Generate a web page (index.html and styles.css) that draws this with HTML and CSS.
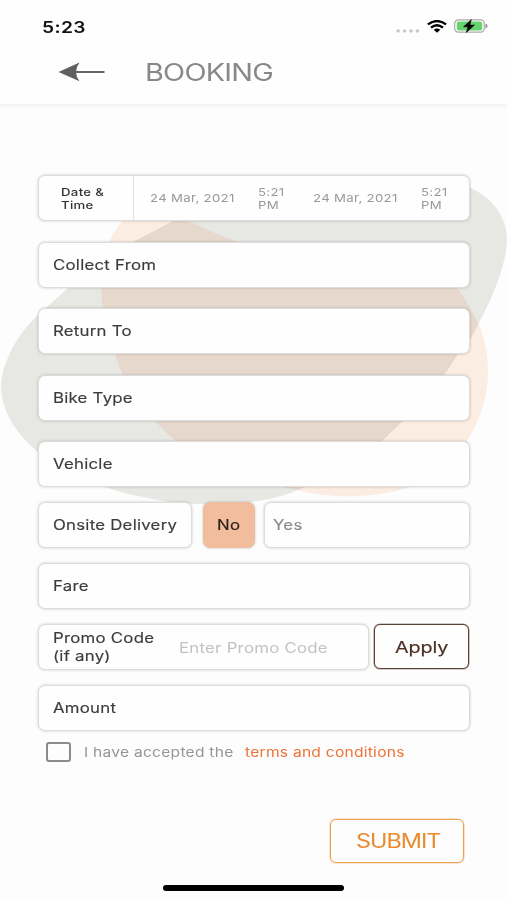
FILE: index.html
```html
<!DOCTYPE html>
<html lang="en">
<head>
<meta charset="utf-8">
<title>Booking</title>
<link rel="stylesheet" href="styles.css">
</head>
<body>
<div class="screen">
  <header class="header">
    <div class="status">
      <span class="wide clock">5:23</span>
      <div class="status-icons">
        <svg class="dots" width="24" height="6" viewBox="0 0 24 6" fill="#c8c8ca"><circle cx="2.2" cy="3" r="1.8"/><circle cx="8.6" cy="3" r="1.8"/><circle cx="15" cy="3" r="1.8"/><circle cx="21.4" cy="3" r="1.8"/></svg>
        <svg class="wifi" width="20" height="13" viewBox="0 0 20 13"><g fill="none" stroke="#000" stroke-width="2.4"><path d="M.9 4.4Q10-2.2 19.1 4.4"/><path d="M4 7.6Q10 3 16 7.6"/></g><path d="M6.7 9.8Q10 7.2 13.3 9.8L10 12.8Z"/></svg>
        <svg class="battery" width="34" height="14" viewBox="0 0 34 14"><rect x=".7" y=".9" width="29.6" height="12.2" rx="3.6" fill="#fff" stroke="#aaa" stroke-width="1.2"/><rect x="2.8" y="2.6" width="25.4" height="8.8" rx="2" fill="#65d36e"/><path d="M31.4 4.6Q33.6 5.2 33.6 7T31.4 9.4Z" fill="#999"/><path d="M17.3.6L9.6 7.8H14L12.4 13.4L20.4 6.1H15.8Z" stroke="#000" stroke-width=".6"/></svg>
      </div>
    </div>
    <div class="title-bar">
      <svg class="back" width="48" height="20" viewBox="0 0 48 20"><path d="M16 10H46.5" stroke="#666" stroke-width="2"/><path d="M0.5 10L21.5.5Q14.5 10 21.5 19.3Z" fill="#606060"/></svg>
      <h1 class="wide title">BOOKING</h1>
    </div>
  </header>

  <svg class="blobs" width="507" height="340" viewBox="0 170 507 340">
    <path class="blob-peach" d="M150 200C132 206 118 224 109 242C101 262 100 290 103 310C106 330 110 342 115 354C120 374 134 400 154 420C162 428 168 435 176 441C210 468 250 482 293 489C330 499 370 499 407 488C435 478 455 460 467 441C482 418 489 390 488 368C487 350 484 335 478 323C472 312 466 299 457 288C420 248 340 270 238 242C220 236 205 228 188 221C176 212 166 202 150 200Z"/>
    <path class="blob-grey" d="M360 176C410 173 440 177 469 187C493 198 507 217 507 240C506 270 488 307 470 340L458 354L445 374C432 392 418 407 404 420L382 441C360 458 330 477 303 488C285 496 268 500 250 502C200 508 150 502 105 487C80 479 56 466 38 452C17 435 2 412 1 388C1 378 3 369 7 360C14 342 25 327 38 315L68 288L133 242L173 221C230 192 295 179 360 176Z"/>
  </svg>

  <main class="form">
    <section class="field dates">
      <div class="dates-label"><span class="wide">Date &amp;<br>Time</span></div>
      <div class="date"><span class="wide">24 Mar, 2021</span></div>
      <div class="time"><span class="wide">5:21<br>PM</span></div>
      <div class="date"><span class="wide">24 Mar, 2021</span></div>
      <div class="time"><span class="wide">5:21<br>PM</span></div>
    </section>
    <section class="field"><span class="wide label">Collect From</span></section>
    <section class="field"><span class="wide label">Return To</span></section>
    <section class="field"><span class="wide label">Bike Type</span></section>
    <section class="field"><span class="wide label">Vehicle</span></section>
    <section class="row">
      <div class="field onsite"><span class="wide label">Onsite Delivery</span></div>
      <div class="field no"><span class="wide label">No</span></div>
      <div class="field yes"><span class="wide label">Yes</span></div>
    </section>
    <section class="field"><span class="wide label">Fare</span></section>
    <section class="row promo-row">
      <div class="field promo">
        <span class="wide label promo-label">Promo Code<br>(if any)</span>
        <span class="wide placeholder">Enter Promo Code</span>
      </div>
      <div class="apply"><span class="wide">Apply</span></div>
    </section>
    <section class="field"><span class="wide label">Amount</span></section>
    <section class="terms">
      <span class="checkbox"></span>
      <span class="accept"><span class="wide">I have accepted the</span></span>
      <span class="link"><span class="wide">terms and conditions</span></span>
    </section>
  </main>

  <footer class="footer">
    <div class="submit"><span class="wide">SUBMIT</span></div>
    <div class="home-bar"></div>
  </footer>
</div>
</body>
</html>
```

FILE: styles.css
```css
* { box-sizing: border-box; }
body { margin: 0; background: #fdfdfd; font-family: Inter, "Liberation Sans", sans-serif; }
.screen { position: relative; width: 507px; height: 900px; overflow: hidden; display: flex; flex-direction: column; }

/* Extended letterforms used across the app */
.wide { display: inline-block; transform: scaleX(1.2); transform-origin: left center; white-space: nowrap; }

.header { height: 104px; flex: none; background: #fefefe; box-shadow: 0 1px 5px rgba(0,0,0,.08); }
.status { height: 50px; display: flex; justify-content: space-between; padding: 17px 19px 0 42px; }
.clock { font-size: 16px; line-height: 20px; font-weight: 600; color: #111; letter-spacing: .3px; }
.status-icons { display: flex; align-items: flex-start; }
.dots { margin: 11px 0 0; }
.wifi { margin: 3px 0 0 7px; }
.battery { margin: 2px 0 0 7px; }
.title-bar { height: 44px; display: flex; align-items: center; padding-left: 58px; }
.title { margin: 2px 0 0 39px; font-size: 24px; line-height: 30px; font-weight: 400; color: #88888b; letter-spacing: -.6px; }

.blobs { position: absolute; left: 0; top: 170px; }
.blob-peach { fill: #fcede3; }
.blob-grey { fill: #e9e9e6; mix-blend-mode: multiply; }

.form { position: relative; display: flex; flex-direction: column; padding: 71px 37px 0 38px; }
.field { height: 46px; display: flex; align-items: center; padding-left: 14px; background: #fefefe; border: 1px solid #dcdcdc; border-radius: 7px; box-shadow: 0 0 3px rgba(0,0,0,.2); margin-bottom: 20.5px; color: #3c3c3c; }
.field:nth-child(5) { margin-bottom: 15px; }
.field:nth-child(7), .field:nth-child(9) { margin-bottom: 15px; }
.label { font-size: 14px; line-height: 18px; letter-spacing: .2px; -webkit-text-stroke: .15px; }

.dates { padding: 0; font-size: 11px; line-height: 13px; letter-spacing: .26px; }
.dates-label { width: 95px; height: 44px; padding: 10px 0 0 22px; border-right: 1px solid #e3e3e3; color: #333; font-weight: 500; }
.date { width: 124px; padding: 1px 0 0 16px; color: #999; }
.time { width: 39px; padding-top: 1px; color: #999; }

.row { display: flex; margin-bottom: 15px; }
.row .field { margin-bottom: 0; }
.onsite { width: 154px; }
.no { width: 52px; margin-left: 11px; background: #f1bd9d; border-color: #edbd9f; color: #2c211b; }
.yes { flex: 1; margin-left: 9px; padding-left: 8px; color: #8b8b8b; }
.no { padding-left: 13px; }
.promo { width: 331px; padding-left: 14px; }
.promo-label { width: 126px; }
.placeholder { font-size: 14px; color: #c2c2c2; letter-spacing: .2px; }
.apply { width: 95px; height: 45px; margin-left: 5px; padding-left: 20px; border: 1px solid #5b4234; border-radius: 6px; box-shadow: 0 0 0 .6px #a99a91; background: #fefefe; color: #4a3022; font-size: 16.5px; line-height: 45px; letter-spacing: -.1px; -webkit-text-stroke: .15px; }

.terms { display: flex; align-items: center; height: 20px; margin-top: -4px; padding-left: 8px; font-size: 13px; letter-spacing: .2px; }
.checkbox { width: 25px; height: 20px; border: 2px solid #8b8b8b; border-radius: 3px; }
.accept { width: 174px; padding-left: 13px; color: #969696; }
.link { color: #ee7337; }

.footer { position: relative; margin-top: auto; display: flex; flex-direction: column; padding-bottom: 9px; }
.submit { width: 134px; height: 44px; margin: 0 0 22px 330px; padding-left: 25px; border: 1px solid #eda152; border-radius: 6px; box-shadow: 0 0 0 .6px #f5cda3; color: #e98a2c; font-size: 19.5px; line-height: 43px; letter-spacing: -.8px; }
.home-bar { width: 181px; height: 6px; margin-left: 163px; border-radius: 3px; background: #000; }
```
